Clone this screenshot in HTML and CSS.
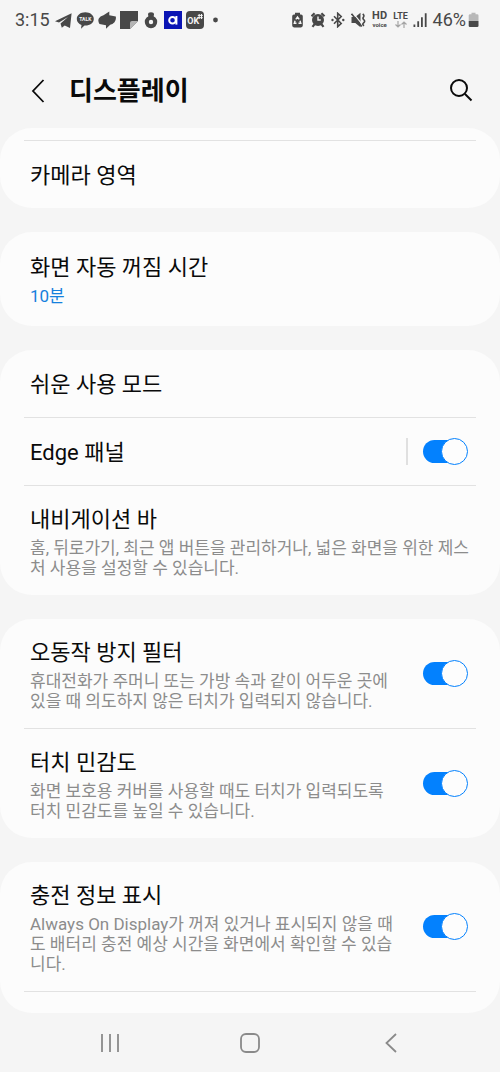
FILE: index.html
```html
<!DOCTYPE html>
<html lang="ko">
<head>
<meta charset="utf-8">
<meta name="viewport" content="width=device-width, initial-scale=1">
<title>디스플레이</title>
<link rel="stylesheet" href="styles.css">
</head>
<body>
<div class="status">
  <div class="status-group">
    <time class="status-text">3:15</time>
    <svg class="icon-18" viewBox="0 0 18 18"><path d="M1 10.200 17.600 2.200 16 17 10.700 14.600 7.800 16.800 6.500 12.500 14 6 5 11.600Z"/></svg>
    <svg class="icon-18" viewBox="0 0 18 18"><path d="M9.300 1.300c4.800 0 8.500 2.900 8.500 6.700s-3.700 6.600-8.500 6.600h-.8L5 17.800l.5-3.900C2.600 12.800.8 10.700.8 8c0-3.800 3.700-6.700 8.500-6.700Z"/><text class="talk-label" x="9.300" y="10">TALK</text></svg>
    <svg class="icon-18" viewBox="0 0 18 18"><path d="M11.300.5v3.800l6.500 1.200q.6 3.300-1.300 5.700-2 2.300-4.300 2.500L8 17.700v-3.500L1.500 13Q-.4 10 .8 7.600 2 5 5.500 4.300Z"/></svg>
    <svg class="icon-18" viewBox="0 0 18 18"><path d="M0 0h18v10l-8 8H0Z"/><path class="fold" d="M10 18v-6q0-2 2-2h6Z"/></svg>
    <svg class="icon-18" viewBox="0 0 18 18"><path d="M6 3.500Q6 1.200 9 1.200t3 2.300L11.500 6h-5Z"/><circle class="ring" cx="9" cy="11" r="4.200"/></svg>
    <svg class="icon-18" viewBox="0 0 18 18"><path class="app-blue" d="M0 0h18v18H0z"/><circle class="app-a" cx="8.500" cy="9.300" r="3.300"/><path class="app-a" d="M12.400 5v8.600"/></svg>
    <svg class="icon-18" viewBox="0 0 18 18"><rect width="18" height="18" rx="4"/><text class="ok-label" x="7.200" y="13">OK</text><path class="spark" d="M13.200 3v5M15.500 3v5M11.800 4.400h5M11.800 6.700h5"/></svg>
    <svg class="icon-18" viewBox="0 0 18 18"><circle cx="7.500" cy="9" r="2.400"/></svg>
  </div>
  <div class="status-group">
    <svg class="icon-16" viewBox="0 0 16 16"><path d="M4 2.400V.800h5v1.600h1q1.800 0 1.800 1.800v9.400q0 1.800-1.800 1.800H3q-1.800 0-1.800-1.800V4.200Q1.200 2.400 3 2.400Z"/><path class="recycle" d="M4.800 7.400 6.500 5l1.700 2.400M9 8.700l.8 2.500H7.500M5.500 11.200H3.300L4.100 8.700"/></svg>
    <svg class="icon-16" viewBox="0 0 16 16"><circle cx="7" cy="8" r="6"/><path class="line-2" d="M.5 4.300 3.600 1.300M10.400 1.300l3.100 3M3.400 12.300l-1.900 2.500M10.600 12.300l1.900 2.500"/><path class="cut" d="M7 4.500V8h2.800"/></svg>
    <svg class="icon-16" viewBox="0 0 16 16"><path class="line" d="m3 4.300 7.200 7.200-3.500 3.200V1.300l3.500 3.200L3 11.700"/><circle cx="1.500" cy="8" r="1.200"/><circle cx="12.300" cy="8" r="1.200"/></svg>
    <svg class="icon-16" viewBox="0 0 16 16"><path d="M.5 5h3.800L9.500.800v14.400L4.300 11H.5Z"/><path class="slash" d="m2.300 1.300 9 11"/><path class="line" d="m.5 1.800 10.300 12.700"/><path class="line" d="M11.700 2q2 1.400.8 3t.4 2.900-.3 3 .5 2.900"/></svg>
    <span class="badge"><b class="hd">HD</b><b class="voice">voice</b></span>
    <span class="badge badge-lte"><b class="lte">LTE</b><svg class="arrows" viewBox="0 0 16 7"><path d="M5 0v6M2.500 3.500 5 6l2.500-2.500M11 7V1M8.500 3.500 11 1l2.500 2.500"/></svg></span>
    <svg class="icon-16" viewBox="0 0 16 16"><path d="M.5 12.500h1.800v2.500H.5zM4.300 9.300h1.800V15H4.300zM8 5.300h1.800V15H8zM11.800 1.300h1.800V15h-1.800z"/></svg>
    <span class="battery-group"><span class="status-text">46%</span><svg class="battery" viewBox="0 0 12 16"><path class="battery-empty" d="M3.500 2.300V.700h4v1.600h1.700q1.300 0 1.300 1.300V9H.7V3.600q0-1.300 1.300-1.300Z"/><path d="M.7 9h9.800v4.700q0 1.300-1.300 1.300H2Q.7 15 .7 13.700Z"/></svg></span>
  </div>
</div>

<header class="app-bar">
  <button class="icon-button" aria-label="뒤로"><svg class="icon-26" viewBox="0 0 26 26"><path d="M19.500 2 9 13l10.500 11"/></svg></button>
  <h1 class="title">디스플레이</h1>
  <button class="icon-button" aria-label="검색"><svg class="icon-26 icon-search" viewBox="0 0 26 26"><circle cx="11" cy="10" r="8"/><path d="m17 16 6.500 6.500"/></svg></button>
</header>

<main class="cards">
  <section class="card card-continued">
    <div class="row row-simple"><div class="row-text"><h2 class="label">카메라 영역</h2></div></div>
  </section>

  <section class="card">
    <div class="row row-value"><div class="row-text"><h2 class="label">화면 자동 꺼짐 시간</h2><p class="desc value">10분</p></div></div>
  </section>

  <section class="card">
    <div class="row row-simple"><div class="row-text"><h2 class="label">쉬운 사용 모드</h2></div></div>
    <div class="row row-simple"><div class="row-text"><label class="label" for="edge">Edge 패널</label></div><span class="separator"></span><input class="switch" type="checkbox" role="switch" id="edge" checked></div>
    <div class="row"><div class="row-text"><h2 class="label">내비게이션 바</h2><p class="desc">홈, 뒤로가기, 최근 앱 버튼을 관리하거나, 넓은 화면을 위한 제스처 사용을 설정할 수 있습니다.</p></div></div>
  </section>

  <section class="card">
    <div class="row"><div class="row-text"><label class="label" for="accidental">오동작 방지 필터</label><p class="desc">휴대전화가 주머니 또는 가방 속과 같이 어두운 곳에 있을 때 의도하지 않은 터치가 입력되지 않습니다.</p></div><input class="switch" type="checkbox" role="switch" id="accidental" checked></div>
    <div class="row"><div class="row-text"><label class="label" for="touch">터치 민감도</label><p class="desc">화면 보호용 커버를 사용할 때도 터치가 입력되도록 터치 민감도를 높일 수 있습니다.</p></div><input class="switch" type="checkbox" role="switch" id="touch" checked></div>
  </section>

  <section class="card card-continues">
    <div class="row"><div class="row-text"><label class="label" for="charging">충전 정보 표시</label><p class="desc">Always On Display가 꺼져 있거나 표시되지 않을 때도 배터리 충전 예상 시간을 화면에서 확인할 수 있습니다.</p></div><input class="switch" type="checkbox" role="switch" id="charging" checked></div>
  </section>
</main>

<nav class="nav">
  <button class="icon-button nav-button" aria-label="최근 앱"><svg class="icon-26" viewBox="0 0 26 26"><path d="M5 4v18M13 4v18M21 4v18"/></svg></button>
  <button class="icon-button nav-button" aria-label="홈"><svg class="icon-26" viewBox="0 0 26 26"><rect x="4" y="4" width="18" height="18" rx="5"/></svg></button>
  <button class="icon-button nav-button" aria-label="뒤로 가기"><svg class="icon-26" viewBox="0 0 26 26"><path d="M19 4 9.500 13l9.500 9"/></svg></button>
</nav>
</body>
</html>
```
FILE: styles.css
```css
* { box-sizing: border-box; }

body {
  margin: 0;
  min-height: 100vh;
  display: flex;
  flex-direction: column;
  background: #f5f5f5;
  color: #0a0a0a;
  font-family: Roboto, "Noto Sans CJK KR", sans-serif;
}

h1, h2, p { margin: 0; }

/* Status bar */
.status {
  display: flex;
  justify-content: space-between;
  height: 39px;
  padding: 0 20px 0 15px;
  color: #484848;
}
.status svg { fill: #484848; flex: none; }
.status-group { display: flex; align-items: center; gap: 4px; }
.status-text { font-size: 18px; line-height: 20px; }
.icon-18 { width: 18px; height: 18px; }
.icon-16 { width: 16px; height: 16px; }
.status .fold { fill: #b5b5b5; }
.status .ring { fill: none; stroke: #484848; stroke-width: 4; }
.status .app-blue { fill: #0a14b4; }
.status .app-a { fill: none; stroke: #fff; stroke-width: 2; }
.talk-label, .ok-label { fill: #f5f5f5; font-family: Roboto, sans-serif; font-weight: 700; text-anchor: middle; }
.talk-label { font-size: 5px; }
.ok-label { font-size: 9px; }
.spark { stroke: #f5f5f5; stroke-width: 1; }
.recycle, .cut { fill: none; stroke: #f5f5f5; stroke-width: 1.4; }
.line, .line-2 { fill: none; stroke: #484848; stroke-width: 1.6; }
.line-2 { stroke-width: 2.2; }
.slash { stroke: #f5f5f5; stroke-width: 1.2; }
.badge { display: flex; flex-direction: column; align-items: center; width: 18px; }
.badge-lte { width: 16px; }
.hd { font-size: 11px; line-height: 10px; }
.voice { font-size: 6px; line-height: 7px; }
.lte { font-size: 9px; line-height: 9px; }
.status .arrows { width: 16px; height: 7px; fill: none; stroke: #a5a5a5; stroke-width: 1.2; }
.battery-group { display: flex; align-items: center; gap: 2px; }
.battery { width: 12px; height: 16px; }
.battery .battery-empty { fill: #b8b8b8; }

/* Title bar */
.app-bar {
  display: flex;
  align-items: center;
  height: 89px;
  padding: 14px 26px 0 24px;
}
.icon-button { display: flex; padding: 0; border: 0; background: none; color: inherit; }
.icon-26 { width: 26px; height: 26px; fill: none; stroke: currentColor; stroke-width: 1.8; }
.icon-search { stroke-width: 2; }
.title { flex: 1; padding-left: 19px; font-size: 26px; line-height: 36px; font-weight: 700; }

/* Setting cards */
.cards { display: flex; flex-direction: column; gap: 24px; }
.card { border-radius: 32px; background: #fcfcfc; }
.card-continued { padding-top: 12px; }
.card-continues { padding-bottom: 21px; }
.row + .row::before,
.card-continued::before,
.card-continues::after {
  content: "";
  display: block;
  height: 1px;
  background: #e2e2e2;
}
.card-continued::before,
.card-continues::after { margin: 0 24px; }
.row {
  display: flex;
  align-items: center;
  padding: 16px 26px 17px 30px;
  position: relative;
}
.row + .row { margin-top: 1px; }
.row + .row::before { position: absolute; top: -1px; left: 24px; right: 24px; }
.row-simple { min-height: 67px; padding-top: 0; padding-bottom: 0; }
.row-simple .row-text { padding-top: 2px; }
.row-value { padding-top: 18px; padding-bottom: 20px; }
.row-text { flex: 1; }
.label { display: block; font-size: 22px; line-height: 36px; font-weight: 400; }
.desc { color: #8c8c8c; font-size: 17px; line-height: 20px; }
.value { color: #1580dd; }
.separator { width: 2px; height: 27px; background: #e0e0e0; }

.switch {
  appearance: none;
  flex: none;
  display: grid;
  align-items: center;
  width: 45px;
  height: 27px;
  margin: 0 6px 0 20px;
}
.separator + .switch { margin-left: 15px; }
.switch::before, .switch::after { content: ""; grid-area: 1 / 1; }
.switch::before { height: 23px; margin-right: 2px; border-radius: 12px; background: #0381fe; }
.switch::after {
  box-sizing: border-box;
  justify-self: end;
  width: 27px;
  height: 27px;
  border: 1px solid #0381fe;
  border-radius: 50%;
  background: #fdfdfd;
}

/* System navigation */
.nav {
  flex: 1;
  display: grid;
  grid-template-columns: repeat(3, 1fr);
  place-items: center;
  min-height: 58px;
  padding: 0 8%;
  color: #8a8a8a;
}
```
